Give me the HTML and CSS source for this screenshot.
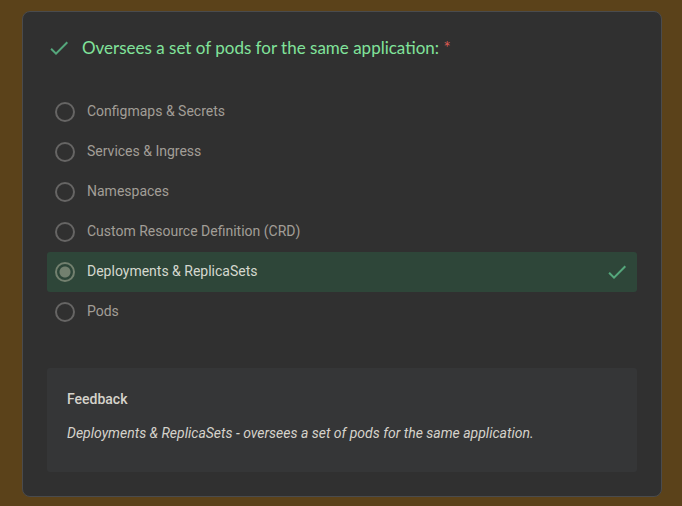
FILE: index.html
```html
<!DOCTYPE html>
<html lang="en">
<head>
<meta charset="utf-8">
<meta name="viewport" content="width=device-width, initial-scale=1">
<title>Quiz question</title>
<link rel="stylesheet" href="styles.css">
</head>
<body>
<main class="card">
  <header class="question">
    <svg class="check" viewBox="0 0 24 24" role="img" aria-label="Correct"><path d="M9 16.2 4.8 12l-1.4 1.4L9 19 21 7l-1.4-1.4z"/></svg>
    <h1 class="title" id="question">Oversees a set of pods for the same application: <span class="required">*</span></h1>
  </header>
  <div class="options" role="radiogroup" aria-labelledby="question">
    <label class="option"><input type="radio" name="answer"><span class="label">Configmaps &amp; Secrets</span></label>
    <label class="option"><input type="radio" name="answer"><span class="label">Services &amp; Ingress</span></label>
    <label class="option"><input type="radio" name="answer"><span class="label">Namespaces</span></label>
    <label class="option"><input type="radio" name="answer"><span class="label">Custom Resource Definition (CRD)</span></label>
    <label class="option correct"><input type="radio" name="answer" checked><span class="label">Deployments &amp; ReplicaSets</span><svg class="check" viewBox="0 0 24 24" role="img" aria-label="Correct"><path d="M9 16.2 4.8 12l-1.4 1.4L9 19 21 7l-1.4-1.4z"/></svg></label>
    <label class="option"><input type="radio" name="answer"><span class="label">Pods</span></label>
  </div>
  <section class="feedback">
    <h2 class="feedback-title">Feedback</h2>
    <p class="feedback-text">Deployments &amp; ReplicaSets - oversees a set of pods for the same application.</p>
  </section>
</main>
</body>
</html>
```
FILE: styles.css
```css
* {
  box-sizing: border-box;
}

body {
  margin: 0;
  padding: 11px 20px 9px 22px;
  background: #5b421a;
  font-family: Roboto, sans-serif;
  font-size: 14px;
  line-height: 22px;
}

.card {
  padding: 24px;
  background: #303030;
  border: 1px solid #4a4b4d;
  border-radius: 8px;
}

.question {
  display: flex;
  align-items: flex-start;
  gap: 11px;
  margin-bottom: 32px;
}

.check {
  flex: none;
  width: 24px;
  height: 24px;
  fill: #55a77c;
}

.title {
  margin: 0;
  color: #81e39b;
  font-family: "Google Sans", Lato, Roboto, sans-serif;
  font-size: 17px;
  font-weight: 400;
  line-height: 24px;
}

.required {
  color: #dc5a50;
}

.options {
  margin-bottom: 36px;
}

.option {
  display: flex;
  align-items: center;
  gap: 12px;
  height: 40px;
  padding: 0 8px;
  border-radius: 3px;
  color: #a29e97;
}

.option input {
  appearance: none;
  flex: none;
  width: 20px;
  height: 20px;
  margin: 0;
  border: 2px solid #666564;
  border-radius: 50%;
}

.option input:checked {
  border-color: #73806f;
  background: radial-gradient(circle, #73806f 5px, transparent 6px);
}

.label {
  flex: 1;
  padding-bottom: 2px;
}

.correct {
  background: #2e4639;
  color: #d5d8cf;
}

.feedback {
  padding: 20px;
  background: #353637;
  border-radius: 3px;
  color: #d5d3cb;
}

.feedback-title {
  margin: 0 0 12px;
  font-size: 14px;
  font-weight: 500;
  line-height: 22px;
}

.feedback-text {
  margin: 0 0 8px;
  font-style: italic;
}
```
